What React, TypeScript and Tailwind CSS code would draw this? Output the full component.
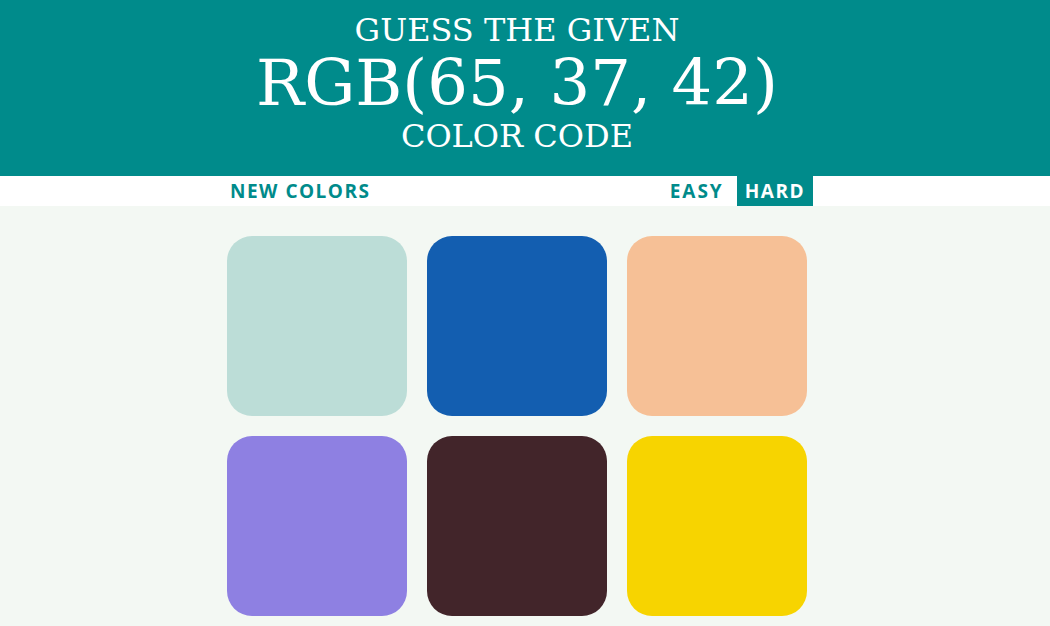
const squares = ["#bcddd7", "#135eb0", "#f6c096", "#8e80e2", "#42252a", "#f7d400"];

export default function App() {
  return (
    <div className="min-h-screen w-full bg-[#f3f8f3]">
      {/* header */}
      <div className="flex h-[176px] flex-col items-center bg-[#008b8b] pr-[16px] pt-[10px] text-white [font-family:'DejaVu_Serif',serif]">
        <h1 className="text-[32px] leading-[40px]">GUESS THE GIVEN</h1>
        <div className="text-[64px] leading-[66px]">RGB(65, 37, 42)</div>
        <h1 className="text-[32px] leading-[40px]">COLOR CODE</h1>
      </div>

      {/* nav */}
      <div className="flex h-[30px] justify-center bg-white pr-[16px] [font-family:'Open_Sans',sans-serif]">
        <div className="flex w-[600px] items-stretch justify-between text-[19px] font-bold tracking-[1.5px] text-[#008b8b]">
          <button className="px-[13px]">NEW COLORS</button>
          <div className="mr-[4px] flex">
            <button className="px-[9px] tracking-[2px]">EASY</button>
            <button className="ml-[4px] bg-[#008b8b] px-[8px] text-white">HARD</button>
          </div>
        </div>
      </div>

      {/* squares */}
      <div className="flex justify-center pr-[16px] pt-[30px]">
        <div className="grid w-[580px] grid-cols-3 gap-[20px]">
          {squares.map((c) => (
            <div key={c} className="h-[180px] w-[180px] rounded-[25px]" style={{ backgroundColor: c }} />
          ))}
        </div>
      </div>
    </div>
  );
}
